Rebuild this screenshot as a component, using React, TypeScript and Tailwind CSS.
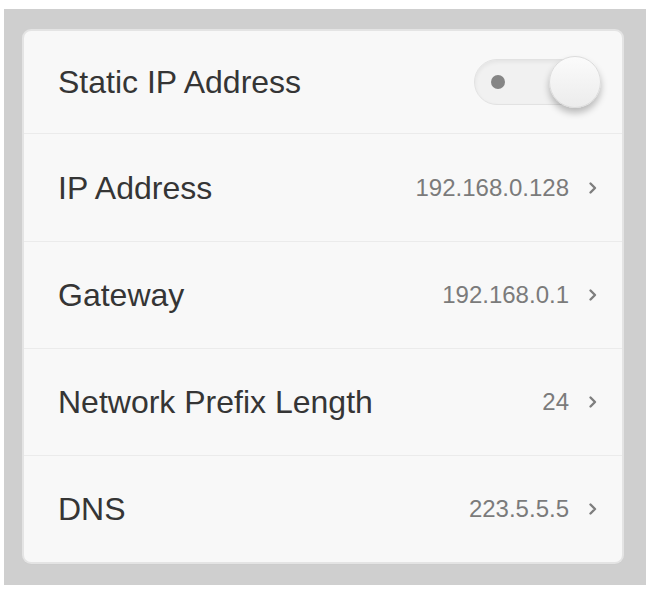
import React from 'react';

interface RowProps {
  label: string;
  value?: string;
  height: string;
  last?: boolean;
  children?: React.ReactNode;
}

const Chevron = () => (
  <svg width="10" height="14" viewBox="0 0 10 14" fill="none" className="ml-[19px] shrink-0">
    <path d="M2.5 2.5 L7 7 L2.5 11.5" stroke="#7e7e7e" strokeWidth="2.4" strokeLinecap="round" strokeLinejoin="round" />
  </svg>
);

const Toggle = () => (
  <div className="relative w-[126px] h-[46px] mr-[-2px]">
    <div className="absolute inset-0 rounded-full border border-[#e2e2e2] bg-[#f1f1f1] shadow-[inset_0_2px_4px_rgba(0,0,0,0.06)]" />
    <div className="absolute left-[17px] top-[16px] w-[14px] h-[14px] rounded-full bg-[#858585]" />
    <div className="absolute right-[-1px] top-[-3px] w-[52px] h-[52px] rounded-full border border-[#dcdcdc] bg-gradient-to-b from-[#fbfbfb] to-[#ececec] shadow-[0_5px_7px_rgba(0,0,0,0.25)]" />
  </div>
);

const Row: React.FC<RowProps> = ({ label, value, height, last, children }) => (
  <div
    className={`flex items-center justify-between pl-[34px] pr-[24px] ${height} ${
      last ? '' : 'border-b border-[#ebebeb]'
    }`}
  >
    <span className="text-[32px] text-[#353535] leading-none">{label}</span>
    {children ?? (
      <div className="flex items-center">
        <span className="text-[24px] text-[#7b7b7b] leading-none">{value}</span>
        <Chevron />
      </div>
    )}
  </div>
);

export default function App() {
  return (
    <div
      className="w-[650px] h-[589px] bg-white pt-[9px] pl-[4px] overflow-hidden"
      style={{ fontFamily: '"Liberation Sans", Arial, sans-serif' }}
    >
      <div className="w-[642px] h-[576px] bg-[#cfcfcf] pl-[20px] pr-[24px] pt-[22px]">
        <div className="rounded-[7px] bg-[#f8f8f8] shadow-[0_1px_2px_rgba(0,0,0,0.18)] ring-2 ring-[#e4e4e4]">
          <Row label="Static IP Address" height="h-[103px]">
            <Toggle />
          </Row>
          <Row label="IP Address" value="192.168.0.128" height="h-[108px]" />
          <Row label="Gateway" value="192.168.0.1" height="h-[107px]" />
          <Row label="Network Prefix Length" value="24" height="h-[107px]" />
          <Row label="DNS" value="223.5.5.5" height="h-[106px]" last />
        </div>
      </div>
    </div>
  );
}
